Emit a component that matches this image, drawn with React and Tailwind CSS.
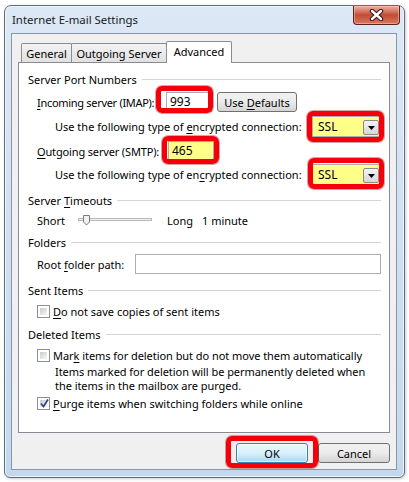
import React from "react";

function U({ children }) {
  return <span className="underline underline-offset-[2px] decoration-[1px]">{children}</span>;
}

function GroupLabel({ children, className = "" }) {
  return (
    <div className={"ml-[9px] mr-[8px] h-[16px] flex items-center " + className}>
      <span className="whitespace-nowrap">{children}</span>
      <div className="flex-1 ml-[5px] h-px bg-[#d5d5d5]" />
    </div>
  );
}

function Checkbox({ checked }) {
  return (
    <div className="relative w-[13px] h-[13px] border border-[#8e8f8f] bg-white p-[2px] shrink-0">
      <div className="w-full h-full bg-gradient-to-br from-[#c9ccd1] to-[#f6f6f6]" />
      {checked && (
        <svg className="absolute left-[1px] top-[0px]" width="11" height="11" viewBox="0 0 11 11">
          <path d="M2 5.5 L4.5 8.5 L9 1.5" fill="none" stroke="#2b4a8c" strokeWidth="1.8" />
        </svg>
      )}
    </div>
  );
}

function Combo() {
  return (
    <div className="w-[70px] h-[21px] border border-[#abadb3] bg-[#ffff88] flex items-center justify-between pl-[5px] pr-[2px]">
      <span className="text-[12px]">SSL</span>
      <div className="w-[16px] h-[15px] mt-[2px] border border-[#8a8a8a] rounded-[2px] bg-gradient-to-b from-[#f4f4f4] to-[#d6d6d6] flex items-center justify-center">
        <svg width="7" height="4" viewBox="0 0 7 4">
          <path d="M0 0 L7 0 L3.5 4 Z" fill="#000" />
        </svg>
      </div>
    </div>
  );
}

function RedBox({ className }) {
  return <div className={"absolute border-[5px] border-[#f5000a] rounded-[6px] shadow-[0_0_0_1px_rgba(120,0,0,0.35)] " + className} />;
}

export default function App() {
  return (
    <div className="relative w-[409px] h-[482px] bg-white overflow-hidden font-['Noto_Sans',sans-serif] text-[11px] leading-none text-black">
      <div className="ml-[4px] mt-[5px] w-[401px] h-[473px] rounded-t-[7px] rounded-b-[6px] border border-[#5f6d7d] bg-gradient-to-b from-[#dce8f5] to-[#c3d8ef] shadow-[inset_0_0_0_1px_#eef4fb,1px_1px_3px_rgba(0,0,0,0.2)] flex flex-col">
        {/* title bar */}
        <div className="h-[27px] flex items-start justify-between shrink-0">
          <div className="pl-[7px] pt-[8px] text-[11.4px] text-[#1a1a1a] whitespace-nowrap">Internet E-mail Settings</div>
          <div className="mr-[4px] w-[47px] h-[19px] rounded-b-[4px] border border-t-0 border-[#5a2418] bg-gradient-to-b from-[#e9b3a5] via-[#c24a33] to-[#d8795f] flex items-center justify-center shadow-[inset_0_0_0_1px_rgba(255,200,190,0.5)]">
            <svg width="15" height="12" viewBox="0 0 15 12">
              <path d="M3 2 L12 10 M12 2 L3 10" stroke="#3a1510" strokeWidth="4.4" strokeLinecap="round" />
              <path d="M3 2 L12 10 M12 2 L3 10" stroke="#ffffff" strokeWidth="2.4" strokeLinecap="round" />
            </svg>
          </div>
        </div>
        {/* client area */}
        <div className="ml-[6px] mr-[7px] mb-[7px] flex-1 border border-[#8796a8] bg-[#f0f0f0] flex flex-col px-[6px] pt-[7px]">
          {/* tabs */}
          <div className="h-[21px] flex items-end shrink-0">
            <div className="ml-[3px] w-[51px] h-[19px] border border-b-0 border-[#898c95] rounded-t-[2px] bg-gradient-to-b from-[#f3f3f3] to-[#e1e1e1] flex items-center justify-center">General</div>
            <div className="ml-[-1px] w-[96px] h-[19px] border border-b-0 border-[#898c95] rounded-t-[2px] bg-gradient-to-b from-[#f3f3f3] to-[#e1e1e1] flex items-center justify-center whitespace-nowrap">Outgoing Server</div>
            <div className="relative z-10 ml-[-1px] mb-[-1px] w-[66px] h-[22px] border border-b-0 border-[#898c95] rounded-t-[2px] bg-white flex items-center justify-center pb-[2px]">Advanced</div>
          </div>
          {/* panel */}
          <div className="h-[371px] border border-[#898c95] bg-white flex flex-col pt-[8px] shrink-0">
            <GroupLabel>Server Port Numbers</GroupLabel>
            <div className="mt-[4px] ml-[18px] h-[22px] flex items-center">
              <div className="w-[129px] whitespace-nowrap tracking-[-0.3px]"><U>I</U>ncoming server (IMAP):</div>
              <div className="w-[46px] h-[20px] border border-[#abadb3] bg-white flex items-center pl-[3px] text-[12px]">993</div>
              <div className="ml-[5px] w-[80px] h-[20px] border border-[#707070] rounded-[3px] bg-gradient-to-b from-[#f2f2f2] via-[#ebebeb] to-[#d4d4d4] flex items-center justify-center">
                <span>Use <U>D</U>efaults</span>
              </div>
            </div>
            <div className="mt-[3px] ml-[18px] mr-[7px] h-[21px] flex items-center justify-between">
              <div className="pl-[18px] whitespace-nowrap">Use the following type of <U>e</U>ncrypted connection:</div>
              <Combo />
            </div>
            <div className="mt-[3px] ml-[18px] h-[22px] flex items-center">
              <div className="w-[131px] whitespace-nowrap tracking-[-0.15px]"><U>O</U>utgoing server (SMTP):</div>
              <div className="w-[46px] h-[20px] border border-[#abadb3] bg-[#ffff88] flex items-center pl-[3px] text-[12px]">465</div>
            </div>
            <div className="mt-[2px] ml-[18px] mr-[7px] h-[21px] flex items-center justify-between">
              <div className="pl-[18px] whitespace-nowrap">Use the following type of en<U>c</U>rypted connection:</div>
              <Combo />
            </div>
            <GroupLabel className="mt-[7px]">Server <U>T</U>imeouts</GroupLabel>
            <div className="mt-[2px] ml-[18px] h-[20px] flex items-center">
              <div className="w-[41px]">Short</div>
              <svg width="74" height="14" viewBox="0 0 74 14">
                <rect x="0.5" y="5.5" width="73" height="2" fill="#eef0f0" stroke="#b8b8b8" />
                <path d="M5.5 2.5 H11.5 V9 L8.5 12 L5.5 9 Z" fill="#f2f2f2" stroke="#7a7a7a" />
              </svg>
              <div className="ml-[15px] w-[35px]">Long</div>
              <div>1 minute</div>
            </div>
            <GroupLabel className="mt-[4px]">Folders</GroupLabel>
            <div className="mt-[4px] ml-[18px] h-[20px] flex items-center">
              <div className="w-[98px] whitespace-nowrap">Root <U>f</U>older path:</div>
              <div className="w-[246px] h-[20px] border border-[#abadb3] bg-white" />
            </div>
            <GroupLabel className="mt-[8px]">Sent Items</GroupLabel>
            <div className="mt-[5px] ml-[18px] h-[16px] flex items-center gap-[3px]">
              <Checkbox />
              <div className="whitespace-nowrap"><U>D</U>o not save copies of sent items</div>
            </div>
            <GroupLabel className="mt-[7px]">Deleted Items</GroupLabel>
            <div className="mt-[5px] ml-[18px] h-[16px] flex items-center gap-[3px]">
              <Checkbox />
              <div className="whitespace-nowrap tracking-[-0.05px]">Mar<U>k</U> items for deletion but do not move them automatically</div>
            </div>
            <div className="mt-[2px] ml-[36px] h-[28px] leading-[14px] tracking-[-0.05px]">
              <div className="whitespace-nowrap">Items marked for deletion will be permanently deleted when</div>
              <div className="whitespace-nowrap">the items in the mailbox are purged.</div>
            </div>
            <div className="mt-[2px] ml-[18px] h-[16px] flex items-center gap-[3px]">
              <Checkbox checked />
              <div className="whitespace-nowrap"><U>P</U>urge items when switching folders while online</div>
            </div>
          </div>
          {/* buttons */}
          <div className="mt-[10px] flex justify-end gap-[10px]">
            <div className="w-[72px] h-[20px] border border-[#3c7fb1] rounded-[3px] bg-gradient-to-b from-[#eaf6fd] via-[#d9f0fc] to-[#a7d9f5] flex items-center justify-center shadow-[inset_0_0_0_1px_rgba(255,255,255,0.6)]">OK</div>
            <div className="w-[72px] h-[20px] border border-[#707070] rounded-[3px] bg-gradient-to-b from-[#f2f2f2] via-[#ebebeb] to-[#d4d4d4] flex items-center justify-center">Cancel</div>
          </div>
        </div>
      </div>
      {/* annotation overlays */}
      <RedBox className="left-[156px] top-[86px] w-[57px] h-[27px]" />
      <RedBox className="left-[307px] top-[111px] w-[77px] h-[31px]" />
      <RedBox className="left-[162px] top-[136px] w-[57px] h-[28px]" />
      <RedBox className="left-[308px] top-[158px] w-[76px] h-[31px]" />
      <RedBox className="left-[226px] top-[436px] w-[92px] h-[32px]" />
    </div>
  );
}
